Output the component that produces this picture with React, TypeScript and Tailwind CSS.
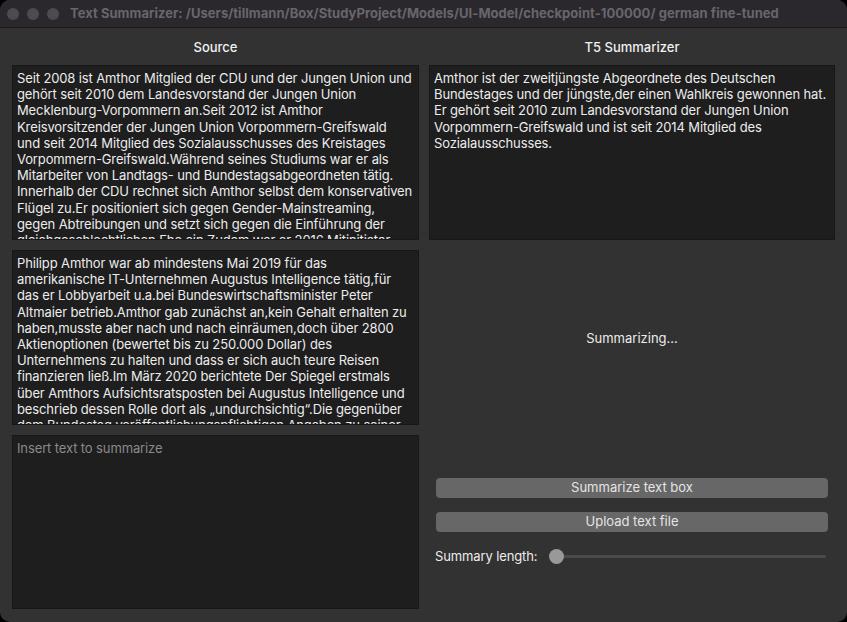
const sourceA = [
  "Seit 2008 ist Amthor Mitglied der CDU und der Jungen Union und",
  "gehört seit 2010 dem Landesvorstand der Jungen Union",
  "Mecklenburg-Vorpommern an.Seit 2012 ist Amthor",
  "Kreisvorsitzender der Jungen Union Vorpommern-Greifswald",
  "und seit 2014 Mitglied des Sozialausschusses des Kreistages",
  "Vorpommern-Greifswald.Während seines Studiums war er als",
  "Mitarbeiter von Landtags- und Bundestagsabgeordneten tätig.",
  "Innerhalb der CDU rechnet sich Amthor selbst dem konservativen",
  "Flügel zu.Er positioniert sich gegen Gender-Mainstreaming,",
  "gegen Abtreibungen und setzt sich gegen die Einführung der",
  "gleichgeschlechtlichen Ehe ein.Zudem war er 2016 Mitinitiator",
]

const sourceB = [
  "Philipp Amthor war ab mindestens Mai 2019 für das",
  "amerikanische IT-Unternehmen Augustus Intelligence tätig,für",
  "das er Lobbyarbeit u.a.bei Bundeswirtschaftsminister Peter",
  "Altmaier betrieb.Amthor gab zunächst an,kein Gehalt erhalten zu",
  "haben,musste aber nach und nach einräumen,doch über 2800",
  "Aktienoptionen (bewertet bis zu 250.000 Dollar) des",
  "Unternehmens zu halten und dass er sich auch teure Reisen",
  "finanzieren ließ.Im März 2020 berichtete Der Spiegel erstmals",
  "über Amthors Aufsichtsratsposten bei Augustus Intelligence und",
  "beschrieb dessen Rolle dort als „undurchsichtig“.Die gegenüber",
  "dem Bundestag veröffentlichungspflichtigen Angaben zu seiner",
]

const summary = [
  "Amthor ist der zweitjüngste Abgeordnete des Deutschen",
  "Bundestages und der jüngste,der einen Wahlkreis gewonnen hat.",
  "Er gehört seit 2010 zum Landesvorstand der Jungen Union",
  "Vorpommern-Greifswald und ist seit 2014 Mitglied des",
  "Sozialausschusses.",
]

// read-only text area, lines broken as in the original window
function TextBox({ lines }: { lines: string[] }) {
  return (
    <div className="h-[175px] overflow-hidden border border-[#171717] bg-[#1e1e1e] pl-[4px] pt-[4px] text-[13px] leading-[16.2px] tracking-[-0.12px] text-[#ececec]">
      {lines.map((line, i) => (
        <div key={i} className="whitespace-nowrap">
          {line}
        </div>
      ))}
    </div>
  )
}

export default function App() {
  return (
    <div className="h-[622px] w-[847px] bg-black" style={{ fontFamily: "Inter, 'Noto Sans', sans-serif" }}>
      <div className="flex h-full flex-col overflow-hidden rounded-[10px] bg-[#323232]">
        {/* title bar */}
        <div className="flex h-[28px] items-center border-b border-[#1a1a1a] bg-[#2b282d] pl-[7px]">
          <div className="flex gap-[8px]">
            <span className="h-[12px] w-[12px] rounded-full bg-[#4d4a50]" />
            <span className="h-[12px] w-[12px] rounded-full bg-[#4d4a50]" />
            <span className="h-[12px] w-[12px] rounded-full bg-[#4d4a50]" />
          </div>
          <div className="ml-[11px] whitespace-nowrap text-[13px] font-bold tracking-[0.04px] text-[#69656c]">
            Text Summarizer: /Users/tillmann/Box/StudyProject/Models/UI-Model/checkpoint-100000/ german fine-tuned
          </div>
        </div>

        <div className="grid flex-1 grid-cols-[407px_406px] gap-x-[10px] px-[12px]">
          {/* left column */}
          <div className="flex flex-col">
            <div className="flex h-[37px] items-center justify-center pt-[3px] text-[13px] font-medium text-[#f0f0f0]">Source</div>
            <TextBox lines={sourceA} />
            <div className="mt-[10px]">
              <TextBox lines={sourceB} />
            </div>
            <div className="mt-[10px] h-[174px] border border-[#171717] bg-[#1e1e1e] pl-[4px] pt-[4px] text-[13px] leading-[16.2px] tracking-[-0.12px] text-[#8a8a8a]">
              Insert text to summarize
            </div>
          </div>

          {/* right column */}
          <div className="flex flex-col">
            <div className="flex h-[37px] items-center justify-center pt-[3px] text-[13px] font-medium text-[#f0f0f0]">T5 Summarizer</div>
            <TextBox lines={summary} />
            <div className="h-[238px] pt-[89px] text-center text-[13px] text-[#ececec]">Summarizing...</div>
            <div className="flex flex-col gap-[14px] px-[7px]">
              <button className="h-[20px] rounded-[4px] bg-[#676767] text-[13px] text-[#e4e4e4]">Summarize text box</button>
              <button className="h-[20px] rounded-[4px] bg-[#676767] text-[13px] text-[#e4e4e4]">Upload text file</button>
            </div>
            <div className="mt-[15px] flex items-center pl-[6px] pr-[9px]">
              <span className="text-[13px] tracking-[-0.12px] text-[#ececec]">Summary length:</span>
              <div className="relative ml-[12px] flex h-[16px] flex-1 items-center">
                <div className="h-[3px] w-full rounded-full bg-[#4a4a4a]" />
                <span className="absolute left-0 top-[0.5px] h-[15px] w-[15px] rounded-full bg-[#99989b]" />
              </div>
            </div>
          </div>
        </div>
      </div>
    </div>
  )
}
